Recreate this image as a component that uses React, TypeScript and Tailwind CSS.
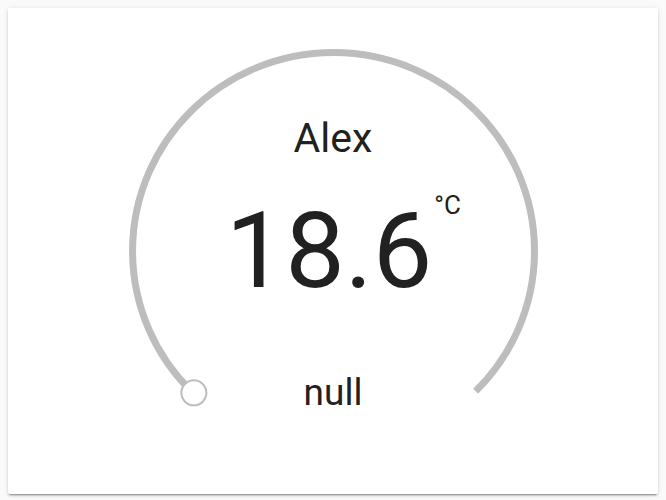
import React from "react";

export default function App() {
  const cx = 325.5;
  const cy = 243;
  const rx = 201;
  const ry = 198.5;
  const kx = rx * Math.SQRT1_2;
  const ky = ry * Math.SQRT1_2;
  const sx = cx - kx, sy = cy + ky;
  const mx = cx + kx, my = cy - ky;
  const ex = cx + kx, ey = cy + ky;
  return (
    <div className="min-h-[500px] bg-[#fafafa] p-2" style={{ fontFamily: "Roboto, 'Noto Sans', sans-serif" }}>
      <div className="grid h-[486px] w-[650px] rounded-[2px] bg-white shadow-[0_2px_2px_0_rgba(0,0,0,0.14),0_1px_5px_0_rgba(0,0,0,0.12),0_3px_1px_-2px_rgba(0,0,0,0.2)]">
        <svg className="[grid-area:1/1]" width="650" height="486" viewBox="0 0 650 486">
          <path d={`M ${sx} ${sy} A ${rx} ${ry} 0 0 1 ${mx} ${my}`} fill="none" stroke="#bdbdbd" strokeWidth="7" />
          <path d={`M ${mx} ${my} A ${rx} ${ry} 0 0 1 ${ex} ${ey}`} fill="none" stroke="#bdbdbd" strokeWidth="7" />
          <circle cx={sx + 2.5} cy={sy + 1.5} r="12.5" fill="#fff" stroke="#bdbdbd" strokeWidth="2" />
        </svg>
        <div className="[grid-area:1/1] flex flex-col items-center pt-[110px] text-[#212121]">
          <div className="text-[41px] leading-[41px]">Alex</div>
          <div className="mt-[39px] flex items-start">
            <div className="text-[106px] leading-[106px]">18.6</div>
            <div className="w-[8px] overflow-visible">
              <div className="-mt-[6px] ml-[2px] whitespace-nowrap text-[26px] leading-[26px]">°C</div>
            </div>
          </div>
          <div className="mt-[70px] text-[37px] leading-[37px]">null</div>
        </div>
      </div>
    </div>
  );
}
